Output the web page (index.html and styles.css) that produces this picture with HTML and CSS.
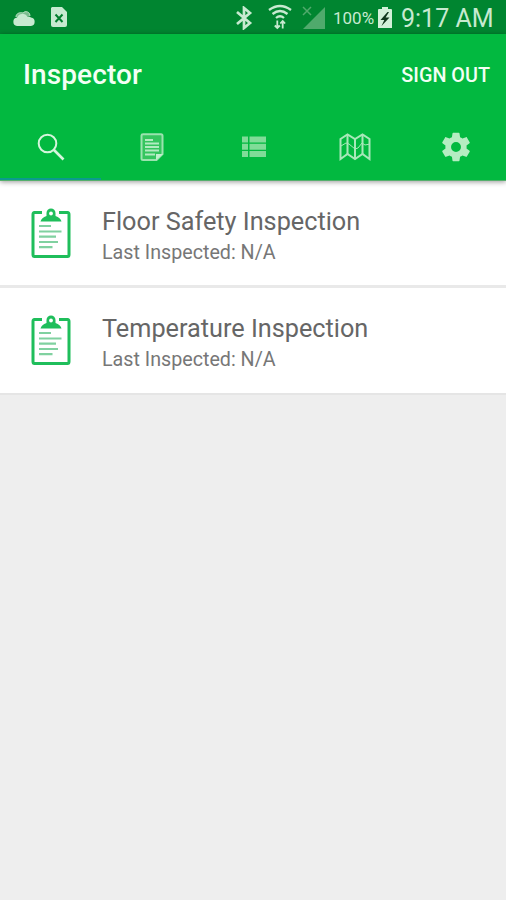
FILE: index.html
```html
<!DOCTYPE html>
<html lang="en">
<head>
<meta charset="utf-8">
<title>Inspector</title>
<link rel="stylesheet" href="styles.css">
</head>
<body>
<div class="status">
  <svg class="cloud" width="24" height="18" viewBox="0 0 24 18"><path d="M4 8a5 4 0 0 1 7-4 4 4 0 0 1 7 3" fill="#79bd8d" stroke="#b5dfc0"/><path d="M5 17a4.300 4.300 0 0 1 0-8.500 6 6 0 0 1 10.500-1 5 5 0 0 1 3.500 1 4.300 4.300 0 0 1 0 8.500z" fill="#c7ead0"/></svg>
  <svg class="sim" width="18" height="22" viewBox="0 0 18 22"><path d="M2 1h10l5 5v13q0 2-2 2H3q-2 0-2-2V2z" fill="#c7ead0"/><path d="m5.500 8.500 7 7.500m0-7.500-7 7.500" stroke="#007e2d" stroke-width="2"/></svg>
  <div class="status-right">
    <svg class="bluetooth" width="18" height="24" viewBox="0 0 18 24"><path d="m2 6 13 11-6 5V2l6 5L2 18" fill="none" stroke="#c7ead0" stroke-width="2.700"/></svg>
    <svg class="wifi" width="24" height="26" viewBox="0 0 24 26"><g fill="none" stroke="#c7ead0" stroke-width="2.300"><path d="M1 6q11-8 22 0M4.500 10q7.500-6 15 0M8 14q4-3.500 8 0"/><path d="M9.300 16.500v8M6.800 21.500l2.500 2.500 2.500-2.500M14.700 24.500v-8M12.300 19.500l2.400-2.500 2.400 2.500" stroke-width="1.800"/></g></svg>
    <svg class="signal" width="24" height="24" viewBox="0 0 24 24"><path d="M23 1v22H1z" fill="#50aa6c"/><path d="m1 1 8 8m0-8-8 8" stroke="#50aa6c" stroke-width="1.500"/></svg>
    <span class="percent">100%</span>
    <svg class="battery" width="16" height="24" viewBox="0 0 16 24"><path d="M5 1h6v2h3q1 0 1 1v18H1V4q0-1 1-1h3z" fill="#d3f0d9"/><path d="m10.500 6-7 8h3.800l-2.800 6 8-8.500H8.600L12 6z" fill="#10371c"/></svg>
    <span class="clock">9:17 AM</span>
  </div>
</div>
<header class="header">
  <div class="toolbar"><h1 class="title">Inspector</h1><span class="signout">SIGN OUT</span></div>
  <nav class="tabs">
    <div class="tab active"><svg width="28" height="28" viewBox="0 0 28 28" fill="none" stroke="#d5f6dc"><circle cx="10.500" cy="10.500" r="8.800" stroke-width="2"/><path d="m16.500 16.500 10 10" stroke-width="2.600"/></svg></div>
    <div class="tab"><svg width="24" height="28" viewBox="0 0 24 28"><path d="M3 1.200h18q1.500 0 1.500 1.500V21l-6 6H3q-1.500 0-1.500-1.500v-23Q1.500 1.200 3 1.200z" fill="#35c55f" stroke="#9ae3ae" stroke-width="2"/><path d="M5 7h8M5 10.500h14M5 14h14M5 17.500h14M5 21.500h10" stroke="#b2ebc1" stroke-width="1.800"/><path d="M16 27v-6h7z" fill="#c0f0cc"/></svg></div>
    <div class="tab list-tab"><svg width="26" height="22" viewBox="0 0 26 22" fill="#80dc98"><path d="M1 .5h6v6H1zM8.500.5H25v6H8.500zM1 7.800h6v6H1zM8.500 7.800H25v6H8.500zM1 15.100h6v6H1zM8.500 15.100H25v6H8.500z"/></svg></div>
    <div class="tab"><svg width="32" height="28" viewBox="0 0 32 28" fill="none" stroke="#a8e8b9" stroke-width="2"><path d="m1.500 6 7-4.500 7.500 4.500 7.500-4.500L30.500 6v20l-7-5-7.500 5-7.500-5-7 5z"/><path d="M8.500 2v19M16 6v20M23.500 2v19"/><path d="m2 13 5-3 3 1 6 5 3-1 4-5 3 2 5-1" stroke-width="1"/></svg></div>
    <div class="tab"><svg width="34" height="34" viewBox="0 0 24 24" fill="#b5edc2"><path d="M19.430 12.980c.04-.32.070-.64.070-.98s-.03-.66-.07-.98l2.110-1.650c.19-.15.240-.42.120-.64l-2-3.460c-.12-.22-.39-.3-.61-.22l-2.490 1c-.52-.4-1.080-.73-1.690-.98l-.38-2.650A.488.488 0 0 0 14 2h-4c-.25 0-.46.180-.49.420l-.38 2.650c-.61.250-1.170.590-1.690.980l-2.490-1c-.23-.09-.49 0-.61.220l-2 3.460c-.13.220-.07.490.120.640l2.110 1.650c-.04.320-.07.650-.07.980s.03.660.070.980l-2.110 1.650c-.19.150-.24.420-.12.640l2 3.460c.12.220.390.300.610.220l2.490-1c.52.400 1.080.730 1.690.980l.38 2.650c.03.240.240.420.490.420h4c.25 0 .46-.18.490-.42l.38-2.650c.61-.25 1.170-.59 1.690-.98l2.490 1c.23.090.49 0 .61-.22l2-3.460c.12-.22.070-.49-.12-.64zM12 15.500a3.500 3.500 0 1 1 0-7 3.500 3.500 0 0 1 0 7z"/></svg></div>
  </nav>
</header>
<main class="list">
  <article class="row">
    <svg class="clipboard" width="40" height="50" viewBox="0 0 40 50"><path d="M11 4.500H3.500q-1.500 0-1.500 2v40q0 2 1.500 2h33q1.500 0 1.500-2v-40q0-2-1.500-2H28" fill="none" stroke="#1fbe5b" stroke-width="3"/><path d="M9.500 13.500q1-4 6-5.500V5a4.500 4.500 0 0 1 9 0v3q5 1.500 6 5.500z" fill="#1fbe5b"/><circle cx="20" cy="5.500" r="1.900" fill="#fff"/><path d="M8 18h12M8 23.500h22.500M8 28.700h17M8 34h19M8 39.200h13.500" stroke="#80d1a0" stroke-width="2.200"/></svg>
    <div class="copy"><h2 class="name">Floor Safety Inspection</h2><p class="date">Last Inspected: N/A</p></div>
  </article>
  <article class="row">
    <svg class="clipboard" width="40" height="50" viewBox="0 0 40 50"><path d="M11 4.500H3.500q-1.500 0-1.500 2v40q0 2 1.500 2h33q1.500 0 1.500-2v-40q0-2-1.500-2H28" fill="none" stroke="#1fbe5b" stroke-width="3"/><path d="M9.500 13.500q1-4 6-5.500V5a4.500 4.500 0 0 1 9 0v3q5 1.500 6 5.500z" fill="#1fbe5b"/><circle cx="20" cy="5.500" r="1.900" fill="#fff"/><path d="M8 18h12M8 23.500h22.500M8 28.700h17M8 34h19M8 39.200h13.500" stroke="#80d1a0" stroke-width="2.200"/></svg>
    <div class="copy"><h2 class="name">Temperature Inspection</h2><p class="date">Last Inspected: N/A</p></div>
  </article>
</main>
</body>
</html>
```
FILE: styles.css
```css
* { box-sizing: border-box; }
body { margin: 0; min-height: 900px; background: #eee; font-family: Roboto, sans-serif; overflow: hidden; }
svg { display: block; flex: none; }
h1, h2, p { margin: 0; }
.status { height: 34px; background: #008530; display: flex; align-items: center; padding: 0 13px 0 12px; color: #c7ead0; white-space: nowrap; }
.cloud { margin-top: 1px; }
.sim { margin-left: 14px; }
.status-right { margin-left: auto; display: flex; align-items: center; }
.bluetooth { margin-top: 1px; }
.wifi { margin: 0 10px 0 15px; }
.signal { margin-top: 2px; }
.percent { margin-left: 7px; width: 40px; font-size: 17px; line-height: 34px; padding-top: 2px; }
.battery { margin-left: 4px; margin-top: 1px; }
.clock { margin-left: 8px; width: 92px; font-size: 25px; line-height: 34px; padding-top: 4px; }
.header { position: relative; height: 147px; background: #02b940; border-bottom: 1px solid #55af6d; box-shadow: 0 1px 5px #0006; }
.toolbar { height: 80px; padding: 0 16px 0 23px; display: flex; align-items: center; justify-content: space-between; color: #f2fff4; }
.title { font-size: 28px; font-weight: 500; line-height: 32px; padding-top: 2px; letter-spacing: .1px; }
.signout { font-size: 19.800px; font-weight: 500; padding-top: 2px; }
.tabs { height: 66px; display: grid; grid-template-columns: repeat(5, 1fr); }
.tab { display: flex; align-items: center; justify-content: center; padding-left: 1px; }
.list-tab { padding-left: 3px; }
.active { box-shadow: inset 0 -2px #0a9b8e; }
.row { height: 107px; background: #fff; border-bottom: 2px solid #e5e5e5; display: flex; padding: 27px 31px 0; color: #666; }
.row:first-child { border-bottom: 3px solid #e9e9e9; }
.copy { margin-left: 31px; }
.name { font-size: 25.250px; font-weight: 400; line-height: 30px; margin-top: -1px; white-space: nowrap; }
.date { font-size: 19.700px; line-height: 23px; margin-top: 4px; color: #777; }
```
